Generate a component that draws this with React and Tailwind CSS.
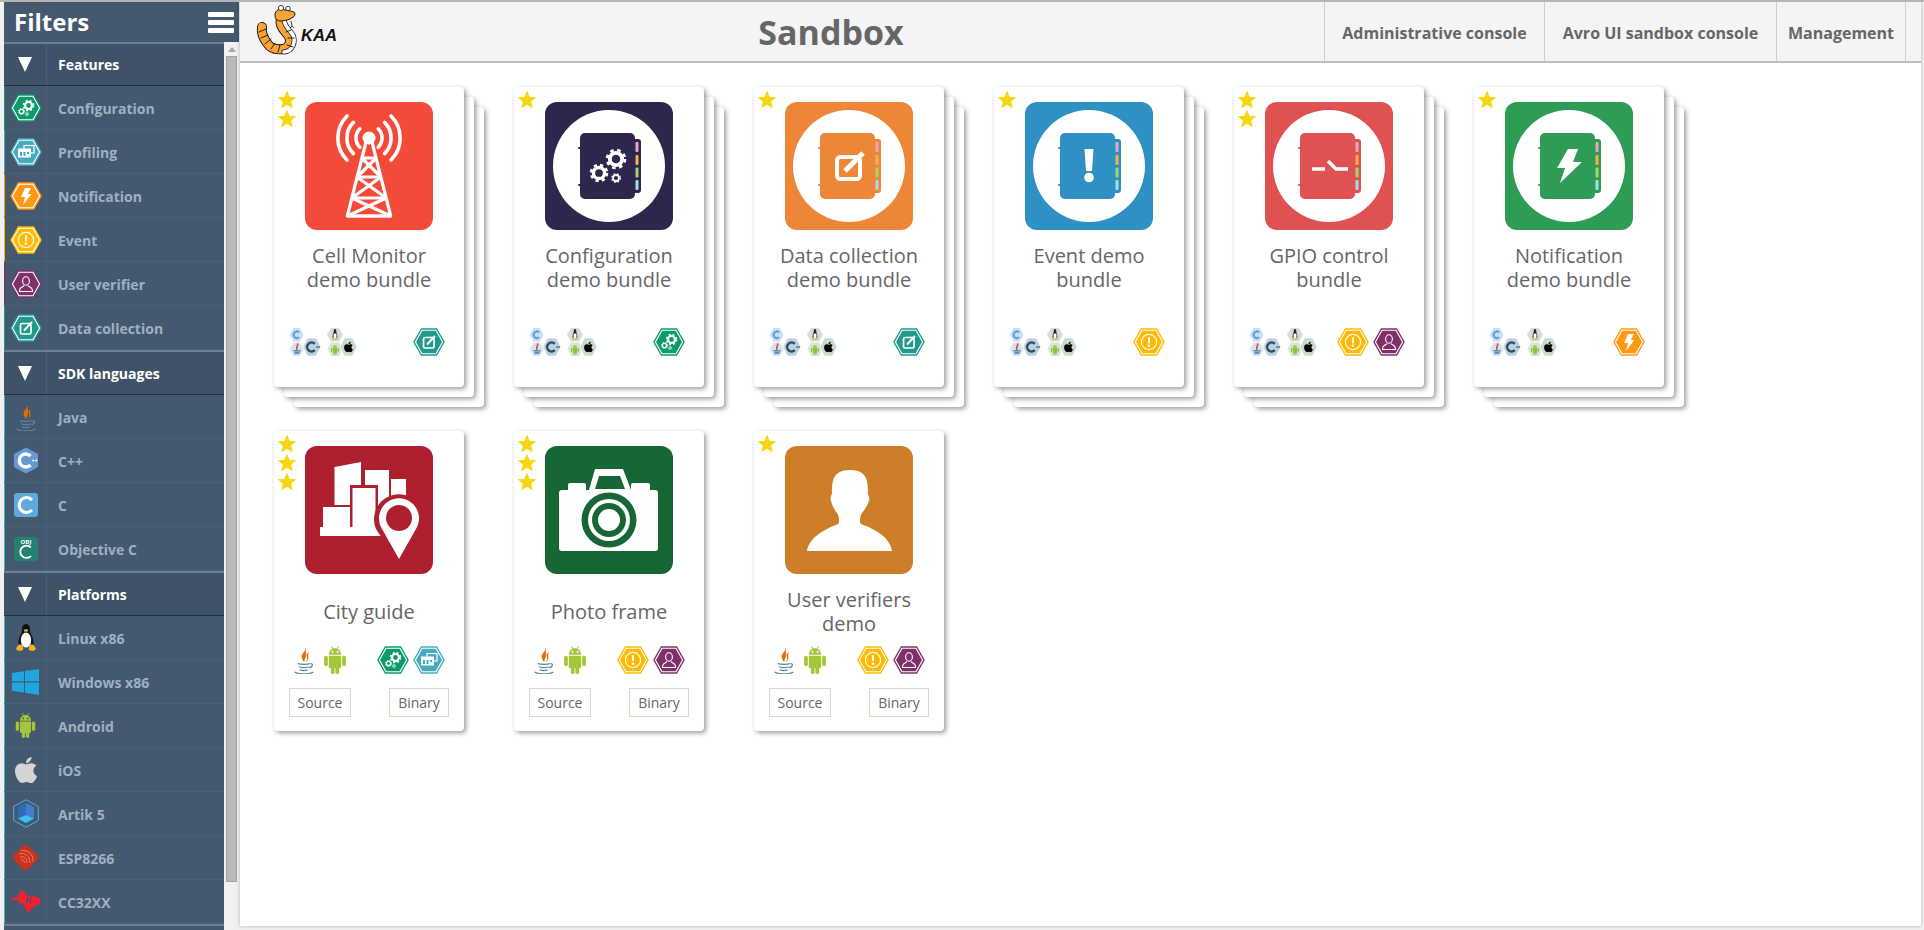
import React from 'react';
import { FaApple } from 'react-icons/fa';

// hexagon badges
const HEX = { config: '#0d9a6c', profile: '#46abc0', notif: '#ff9812', event: '#ffb900', user: '#7f3069', data: '#21998c' };

function Gear({ cx, cy, r, color = 'white' }) {
  const tooth = 2 * Math.PI * r * 0.92;
  return (
    <g fill="none" stroke={color}>
      <circle cx={cx} cy={cy} r={r * 0.62} strokeWidth={r * 0.38} />
      <circle cx={cx} cy={cy} r={r * 0.9} strokeWidth={r * 0.26} strokeDasharray={`${tooth / 16} ${tooth / 16}`} />
    </g>
  );
}

function HexGlyph({ type }) {
  if (type === 'config') return (<><Gear cx={18.5} cy={11.5} r={5.6} /><Gear cx={11.5} cy={17.5} r={3.4} /><Gear cx={17} cy={20} r={2} /></>);
  if (type === 'profile') return (
    <g>
      <rect x="14" y="7.5" width="10" height="7.5" fill="none" stroke="white" strokeWidth="1.2" />
      <rect x="8" y="10.5" width="13" height="9" fill="white" />
      <rect x="10" y="14" width="2" height="4" fill={HEX.profile} />
      <rect x="13.5" y="14" width="2" height="4" fill={HEX.profile} />
      <rect x="17" y="14" width="2" height="2" fill={HEX.profile} />
    </g>
  );
  if (type === 'notif') return <polygon points="15,6 21,6 17.8,12 21.5,12 13,23 15,15 11,15" fill="white" />;
  if (type === 'event') return (
    <g>
      <circle cx="16" cy="14" r="7.6" fill="none" stroke="white" strokeWidth="1.2" />
      <rect x="15" y="9" width="2" height="6.5" rx="1" fill="white" />
      <circle cx="16" cy="17.8" r="1.2" fill="white" />
    </g>
  );
  if (type === 'user') return (
    <g fill="none" stroke="white" strokeWidth="1.1">
      <ellipse cx="16" cy="11" rx="3.4" ry="4.2" />
      <path d="M14 15.5 C13.5 17 9.5 17 9.5 20.5 L9.5 21.5 L22.5 21.5 L22.5 20.5 C22.5 17 18.5 17 18 15.5" />
    </g>
  );
  return (
    <g>
      <rect x="10.5" y="9.5" width="10.5" height="10.5" rx="1.5" fill="none" stroke="white" strokeWidth="1.7" />
      <path d="M14 16.5 L22 8" stroke="white" strokeWidth="2" />
    </g>
  );
}

function HexIcon({ type }) {
  return (
    <svg viewBox="0 0 32 28" className="w-[32px] h-[28px] shrink-0">
      <polygon points="8,0.3 24,0.3 31.8,14 24,27.7 8,27.7 0.2,14" fill={HEX[type]} />
      <polygon points="9,2.2 23,2.2 29.6,14 23,25.8 9,25.8 2.4,14" fill="none" stroke="white" strokeWidth="1.1" />
      <HexGlyph type={type} />
    </svg>
  );
}

function JavaIcon({ className }) {
  return (
    <svg viewBox="1.5 0 19 27" className={className}>
      <path d="M12.5 0 C14 5 7 7.5 9 12 C10 14.5 11.5 15.5 11.5 15.5 C10.5 12.5 15 10 12.5 5.5 C13 4 13 2 12.5 0 Z" fill="#e76f00" />
      <path d="M16 5.5 C12.5 8 14 10.5 14 12.5 C14 14 12.5 15 12.5 15.5 C16 13.5 15 11 15 9.5 C15 8 15.5 6.5 16 5.5 Z" fill="#e76f00" />
      <g fill="none" stroke="#5b86a8" strokeWidth="1.2">
        <path d="M5 17 C8 18 14 18 16.5 17" />
        <path d="M6 20 C9 21 13 21 15.5 20" />
        <path d="M7 23 C10 24 12 24 14.5 23" />
        <path d="M17 17 C20 16.5 20 20 16 21" />
        <path d="M2 25 C6 27.5 16 27.5 20 25" />
      </g>
    </svg>
  );
}

// android robot, 24x28 box
function AndroidShape() {
  return (
    <>
      <path fillRule="evenodd" d="M6 9.5 C6 6.5 8 4.5 9.5 3.8 L8.2 1.4 L8.9 1 L10.3 3.4 C11.4 3 12.6 3 13.7 3.4 L15.1 1 L15.8 1.4 L14.5 3.8 C16 4.5 18 6.5 18 9.5 Z M9.5 5.8 a0.9 0.9 0 1 0 0.01 0 Z M14.5 5.8 a0.9 0.9 0 1 0 0.01 0 Z" />
      <path d="M6 10.3 H18 V21 A1.5 1.5 0 0 1 16.5 22.5 H7.5 A1.5 1.5 0 0 1 6 21 Z" />
      <rect x="1.5" y="10.3" width="3.6" height="10" rx="1.8" />
      <rect x="18.9" y="10.3" width="3.6" height="10" rx="1.8" />
      <rect x="8" y="20" width="3.6" height="8" rx="1.8" />
      <rect x="12.4" y="20" width="3.6" height="8" rx="1.8" />
    </>
  );
}

function AndroidIcon({ className }) {
  return <svg viewBox="1.5 1 21 27" className={className} fill="#a4c639"><AndroidShape /></svg>;
}

function TuxIcon({ className }) {
  return (
    <svg viewBox="0 0 22 28" className={className}>
      <path d="M11 0 C7 0 7 4 7 7 C7 10 3 13 3.5 20 L18.5 20 C19 13 15 10 15 7 C15 4 15 0 11 0 Z" fill="#111" />
      <ellipse cx="11" cy="16" rx="5.2" ry="7.5" fill="#fff" />
      <ellipse cx="11" cy="6.5" rx="2.2" ry="1.3" fill="#f5b120" />
      <path d="M1 25 C2 21 5 20 7 21 C8.5 23 8.5 25 8 26 C5 27.5 2.5 27 1 25 Z" fill="#f5b120" />
      <path d="M21 25 C20 21 17 20 15 21 C13.5 23 13.5 25 14 26 C17 27.5 19.5 27 21 25 Z" fill="#f5b120" />
    </svg>
  );
}

function COnly({ bg, className, children, hex }) {
  return (
    <svg viewBox="0 0 26 26" className={className}>
      {hex
        ? <polygon points="13,0 25,6.5 25,19.5 13,26 1,19.5 1,6.5" fill={bg} />
        : <rect x="1" y="1" width="24" height="24" rx="3" fill={bg} />}
      {children}
    </svg>
  );
}

function SideIcon({ id }) {
  switch (id) {
    case 'java': return <JavaIcon className="w-[22px] h-[28px]" />;
    case 'cpp': return (
      <COnly hex bg="#659ad2" className="w-[26px] h-[29px]">
        <path d="M17.5 8.5 A6.5 6.5 0 1 0 17.5 17.5" fill="none" stroke="white" strokeWidth="3.4" />
        <path d="M19 13 h2.4 M20.2 11.8 v2.4 M22 13 h2.4 M23.2 11.8 v2.4" stroke="white" strokeWidth="0.8" />
      </COnly>
    );
    case 'c': return (
      <COnly bg="#5fa9dc" className="w-[26px] h-[26px]">
        <path d="M19 8 A7.4 7.4 0 1 0 19 18" fill="none" stroke="white" strokeWidth="3" />
      </COnly>
    );
    case 'objc': return (
      <COnly bg="#26806f" className="w-[26px] h-[26px]">
        <text x="13" y="7.5" textAnchor="middle" fontSize="6" fontWeight="700" fill="white" fontFamily="'Open Sans',sans-serif">OBJ</text>
        <path d="M18 11.5 A6.2 6.2 0 1 0 18 20" fill="none" stroke="white" strokeWidth="1.8" />
      </COnly>
    );
    case 'linux': return <TuxIcon className="w-[22px] h-[28px]" />;
    case 'win': return (
      <svg viewBox="0 0 27 26" className="w-[27px] h-[26px]">
        <polygon points="0,4 12,2.2 12,12.2 0,12.2" fill="#1fa8e0" />
        <polygon points="13,2 27,0 27,12.2 13,12.2" fill="#1fa8e0" />
        <polygon points="0,13.5 12,13.5 12,23.5 0,21.8" fill="#1fa8e0" />
        <polygon points="13,13.5 27,13.5 27,26 13,23.8" fill="#1fa8e0" />
      </svg>
    );
    case 'android': return <AndroidIcon className="w-[21px] h-[25px]" />;
    case 'ios': return <FaApple className="w-[30px] h-[30px] text-[#d4d4d4]" />;
    case 'artik': return (
      <svg viewBox="0 0 26 29" className="w-[26px] h-[29px]">
        <polygon points="13,0.7 25.3,7.5 25.3,21.5 13,28.3 0.7,21.5 0.7,7.5" fill="none" stroke="#3fb7e6" strokeWidth="1" />
        <polygon points="5,8 13,4 13,16 5,19.5" fill="#2f6bb8" />
        <polygon points="13,4 21,8 21,19.5 13,16" fill="#3f7fce" />
        <polygon points="5,19.5 13,16 21,19.5 13,24" fill="#3fc0f2" />
      </svg>
    );
    case 'esp': return (
      <svg viewBox="0 0 29 29" className="w-[29px] h-[29px]">
        <rect x="4.5" y="4.5" width="20" height="20" rx="3" transform="rotate(45 14.5 14.5)" fill="#c8321f" />
        <g fill="none" stroke="#e98a6e" strokeWidth="0.9">
          <path d="M8 11 C14 9 19 13 19 20" />
          <path d="M10 8 C17 6 23 12 22 19" />
          <path d="M9 14 C13 13 16 15 16 20" />
          <path d="M10 17 C12 16.5 13.5 18 13.5 20" />
        </g>
      </svg>
    );
    default: return (
      <svg viewBox="0 0 29 21" className="w-[29px] h-[21px]">
        <polygon points="9,0 14,0 14,4 22,5 29,7 29,12 26,15 22,15 19,21 16,20 13,14 9,12 7,9 0,9 0,7 7,6" fill="#f0212b" />
        <text x="14" y="12" fontSize="11" fontWeight="700" fontStyle="italic" fill="#44586f" fontFamily="'Liberation Serif',serif">ti</text>
      </svg>
    );
  }
}

const SECTIONS = [
  { title: 'Features', h: 'h-[42px]', rows: [
    { label: 'Configuration', hex: 'config', accent: 'border-l-[#0d9a6c]' },
    { label: 'Profiling', hex: 'profile', accent: 'border-l-[#46abc0]' },
    { label: 'Notification', hex: 'notif', accent: 'border-l-[#ff9812]' },
    { label: 'Event', hex: 'event', accent: 'border-l-[#ffb900]' },
    { label: 'User verifier', hex: 'user', accent: 'border-l-[#7f3069]' },
    { label: 'Data collection', hex: 'data', accent: 'border-l-[#21998c]' },
  ] },
  { title: 'SDK languages', h: 'h-[43px]', rows: [
    { label: 'Java', icon: 'java' },
    { label: 'C++', icon: 'cpp' },
    { label: 'C', icon: 'c' },
    { label: 'Objective C', icon: 'objc' },
  ] },
  { title: 'Platforms', h: 'h-[43px]', rows: [
    { label: 'Linux x86', icon: 'linux' },
    { label: 'Windows x86', icon: 'win' },
    { label: 'Android', icon: 'android' },
    { label: 'iOS', icon: 'ios' },
    { label: 'Artik 5', icon: 'artik' },
    { label: 'ESP8266', icon: 'esp' },
    { label: 'CC32XX', icon: 'ti' },
  ] },
];

function Sidebar() {
  return (
    <aside className="w-[235px] shrink-0 h-[928px] flex flex-col bg-[#f1f1f1]">
      <div className="h-[40px] shrink-0 bg-[#44586f] flex items-center justify-between pl-[10px] pr-[5px]">
        <span className="text-[24px] font-bold text-white leading-none">Filters</span>
        <div className="flex flex-col gap-[3px] w-[26px]">
          <span className="h-[5px] rounded-[1px] bg-white" />
          <span className="h-[5px] rounded-[1px] bg-white" />
          <span className="h-[5px] rounded-[1px] bg-white" />
        </div>
      </div>
      <div className="flex flex-1 min-h-0">
        <div className="w-[220px] shrink-0 bg-[#44586f] overflow-hidden">
          {SECTIONS.map((s) => (
            <section key={s.title} className="border-t-2 border-[#6c7e93]">
              <div className={`${s.h} flex bg-[#3f5268] border-b border-[#25313f]`}>
                <div className="w-[43px] flex items-center justify-center border-r border-[#4c6076]">
                  <span className="w-0 h-0 border-l-[7.5px] border-r-[7.5px] border-t-[15px] border-l-transparent border-r-transparent border-t-white" />
                </div>
                <span className="pl-[11px] self-center text-[14px] font-bold text-white">{s.title}</span>
              </div>
              {s.rows.map((r) => (
                <div key={r.label} className="h-[44px] flex border-b border-[#4c6076]">
                  <div className={`w-[43px] shrink-0 flex items-center justify-center border-l border-r border-r-[#4c6076] ${r.accent || 'border-l-[#37b4c8]'}`}>
                    {r.hex ? <HexIcon type={r.hex} /> : <SideIcon id={r.icon} />}
                  </div>
                  <span className="pl-[11px] pt-[2px] self-center text-[14px] font-bold text-[#a0b0c0]">{r.label}</span>
                </div>
              ))}
            </section>
          ))}
          <div className="border-t-2 border-[#6c7e93] h-[10px]" />
        </div>
        <div className="flex-1 flex flex-col items-center pt-[5px]">
          <span className="w-0 h-0 border-l-[4px] border-r-[4px] border-b-[5px] border-l-transparent border-r-transparent border-b-[#a8a8a8]" />
          <span className="mt-[4px] w-[11px] h-[826px] bg-[#b9b9b9] border border-[#a3a3a3]" />
        </div>
      </div>
    </aside>
  );
}

function Notebook({ bg, children }) {
  return (
    <>
      <circle cx="64" cy="64" r="56" fill="white" />
      <rect x="84" y="37" width="12" height="54" rx="3" fill={bg} />
      <rect x="90.5" y="40" width="3" height="10" rx="1" fill="#e8a6c0" />
      <rect x="90.5" y="53" width="3" height="10" rx="1" fill="#f6b04a" />
      <rect x="90.5" y="65.5" width="3" height="10" rx="1" fill="#a5d46a" />
      <rect x="90.5" y="78" width="3" height="10" rx="1" fill="#a6dcec" />
      <rect x="33" y="45" width="4" height="2" rx="1" fill={bg} />
      <rect x="33" y="82" width="4" height="2" rx="1" fill={bg} />
      <rect x="35" y="31" width="55" height="66" rx="5" fill={bg} />
      {children}
    </>
  );
}

function TowerLogo() {
  const bars = [[56, 56.75, 71.25], [75, 52, 76], [96, 46.8, 81.2], [114, 42.3, 85.7]];
  return (
    <>
      <g fill="none" stroke="white" strokeWidth="3.6" strokeLinecap="round">
        <path d="M42 14 A31 31 0 0 0 42 58 M48.4 20.4 A22 22 0 0 0 48.4 51.6 M54.8 26.8 A13 13 0 0 0 54.8 45.2" />
        <path d="M86 14 A31 31 0 0 1 86 58 M79.6 20.4 A22 22 0 0 1 79.6 51.6 M73.2 26.8 A13 13 0 0 1 73.2 45.2" />
      </g>
      <g fill="none" stroke="white" strokeWidth="3.2" strokeLinejoin="round">
        <path d="M61 40 L42.3 114 L85.7 114 L67 40" />
        {bars.map(([y, a, b]) => <path key={y} d={`M${a} ${y} L${b} ${y}`} />)}
        <path d="M56.75 56 L76 75 M71.25 56 L52 75 M52 75 L81.2 96 M76 75 L46.8 96 M46.8 96 L85.7 114 M81.2 96 L42.3 114" />
      </g>
      <circle cx="64" cy="36" r="6.5" fill="white" />
    </>
  );
}

function CityLogo() {
  const c = '#ae1f30';
  return (
    <>
      <polygon points="29.5,21 56,16 56,59 29.5,59" fill="white" />
      <rect x="60" y="24" width="24" height="40" fill="white" />
      <rect x="86" y="33" width="15" height="22" fill="white" />
      <rect x="45" y="39" width="28" height="46" fill={c} />
      <rect x="47.5" y="42" width="23" height="42" fill="white" />
      <rect x="18" y="61" width="27" height="22" fill="white" />
      <rect x="15" y="81" width="62" height="9" fill="white" />
      <path d="M94 118 L71 83 A25 25 0 1 1 117 83 Z" fill={c} />
      <path d="M94 113 L76.5 82 A20 20 0 1 1 111.5 82 Z" fill="white" />
      <circle cx="94" cy="72" r="13" fill={c} />
    </>
  );
}

function CameraLogo() {
  const c = '#166636';
  return (
    <>
      <path fillRule="evenodd" fill="white" d="M50 23 L78 23 L86 44 L44 44 Z M54 30 L50 43 L80 43 L75 30 Z" />
      <rect x="23" y="37" width="18" height="12" rx="2" fill="white" />
      <rect x="86" y="37" width="19" height="12" rx="2" fill="white" />
      <rect x="14" y="44" width="99" height="61" rx="3" fill="white" />
      <circle cx="64" cy="74" r="27.5" fill={c} />
      <circle cx="64" cy="74" r="21" fill="white" />
      <circle cx="64" cy="74" r="17" fill={c} />
      <circle cx="64" cy="74" r="11" fill="white" />
    </>
  );
}

function UserLogo() {
  return (
    <path fill="white" d="M22 105 C24 92 38 84 53 78 C55 76 54 70 52 67 C48 62 47 58 46 55 C45 52 46 49 47 48 C47 36 47 24 65 24 C83 24 83 36 83 48 C84 50 85 53 84 55 C83 58 81 62 77 67 C75 70 74 76 76 78 C92 84 105 92 107 105 Z" />
  );
}

const LOGOS = {
  tower: { bg: '#f44a39', el: <TowerLogo /> },
  config: { bg: '#2e274d', el: <Notebook bg="#2e274d"><Gear cx={71} cy={57} r={10} color="white" /><Gear cx={54} cy={71} r={9} color="white" /><Gear cx={71} cy={76} r={4.8} color="white" /></Notebook> },
  data: { bg: '#ee8638', el: <Notebook bg="#ee8638"><rect x="52" y="55" width="23" height="22" rx="3.5" fill="none" stroke="white" strokeWidth="4" /><path d="M60 69 L78 51" stroke="white" strokeWidth="5" /></Notebook> },
  event: { bg: '#2e90c3', el: <Notebook bg="#2e90c3"><polygon points="59.5,47 68.5,47 67,69 61,69" fill="white" /><circle cx="64" cy="75.5" r="4.8" fill="white" /></Notebook> },
  gpio: { bg: '#e05151', el: <Notebook bg="#e05151"><path d="M47 67 H60 M63 59 L71 67 H83" fill="none" stroke="white" strokeWidth="3.4" /></Notebook> },
  notif: { bg: '#2f9c56', el: <Notebook bg="#2f9c56"><polygon points="63,47 73,47 68,60 77,60 55,81 60,66 52,66" fill="white" /></Notebook> },
  city: { bg: '#ae1f30', el: <CityLogo /> },
  camera: { bg: '#166636', el: <CameraLogo /> },
  user: { bg: '#ce7e28', el: <UserLogo /> },
};

function SdkCluster() {
  return (
    <svg viewBox="0 0 31 28" className="w-[31px] h-[28px]">
      <polygon points="3.5,0 10,0 13.5,6.7 10,13.5 3.5,13.5 0,6.7" fill="#c5e0ee" />
      <path d="M9.2 4.3 A3.3 3.3 0 1 0 9.2 9.2" fill="none" stroke="#4f9fd8" strokeWidth="1.8" />
      <polygon points="3.5,14.5 10,14.5 13.5,21 10,28 3.5,28 0,21" fill="#d3e3ec" />
      <path d="M7.5 15.5 C8.5 18 5.5 19 7 22" fill="none" stroke="#d8402a" strokeWidth="1.5" />
      <path d="M3.5 22.8 H10.5 M4.5 25 H9.5" stroke="#2f78b8" strokeWidth="1.3" />
      <polygon points="17.5,10 26,10 31,19 26,28 17.5,28 13,19" fill="#b9d3e0" stroke="white" strokeWidth="0.6" />
      <path d="M24.8 15.8 A4.5 4.5 0 1 0 24.8 22.2" fill="none" stroke="#34495f" strokeWidth="2.4" />
      <path d="M26 19 h4" stroke="#34495f" strokeWidth="1" />
    </svg>
  );
}

function PlatformCluster() {
  return (
    <svg viewBox="0 0 30 28" className="w-[30px] h-[28px]">
      <polygon points="4,0 12,0 16,6.7 12,13.5 4,13.5 0,6.7" fill="#cfe2d2" />
      <g transform="translate(4.4 1) scale(0.33 0.42)"><path d="M11 0 C7 0 7 4 7 7 C7 10 3 13 3.5 20 L18.5 20 C19 13 15 10 15 7 C15 4 15 0 11 0 Z" fill="#222" /><ellipse cx="11" cy="16" rx="5" ry="6" fill="#fff" /><path d="M1 25 L9 21 L9 26 Z M21 25 L13 21 L13 26 Z" fill="#e8a820" /></g>
      <polygon points="4,14.5 12,14.5 15.5,21 12,28 4,28 0.5,21" fill="#d6e6d8" />
      <g transform="translate(3.4 16.2) scale(0.38)" fill="#8cc63f"><AndroidShape /></g>
      <polygon points="17.5,10 25.5,10 30,19 25.5,28 17.5,28 13,19" fill="#c8dccb" stroke="white" strokeWidth="0.6" />
      <g transform="translate(15.5 13)"><FaApple size={12} color="#000" /></g>
    </svg>
  );
}

const Star = () => (
  <svg viewBox="0 0 20 19" className="w-[20px] h-[19px] block">
    <polygon points="10,0.5 12.6,6.9 19.4,7.3 14.1,11.7 15.9,18.4 10,14.7 4.1,18.4 5.9,11.7 0.6,7.3 7.4,6.9" fill="#f6d60e" />
  </svg>
);

const CARDS = [
  { logo: 'tower', title: ['Cell Monitor', 'demo bundle'], stars: 2, hex: ['data'], stack: true },
  { logo: 'config', title: ['Configuration', 'demo bundle'], stars: 1, hex: ['config'], stack: true },
  { logo: 'data', title: ['Data collection', 'demo bundle'], stars: 1, hex: ['data'], stack: true },
  { logo: 'event', title: ['Event demo', 'bundle'], stars: 1, hex: ['event'], stack: true },
  { logo: 'gpio', title: ['GPIO control', 'bundle'], stars: 2, hex: ['event', 'user'], stack: true },
  { logo: 'notif', title: ['Notification', 'demo bundle'], stars: 1, hex: ['notif'], stack: true },
  { logo: 'city', title: ['City guide'], stars: 3, hex: ['config', 'profile'] },
  { logo: 'camera', title: ['Photo frame'], stars: 3, hex: ['event', 'user'] },
  { logo: 'user', title: ['User verifiers', 'demo'], stars: 1, hex: ['event', 'user'] },
];

const SHEET = 'bg-white rounded-[4px] shadow-[2px_2px_5px_rgba(0,0,0,0.4)]';

function Card({ card }) {
  const logo = LOGOS[card.logo];
  return (
    <div className="relative w-[190px] h-[300px]">
      {card.stack && <div className={`absolute left-[20px] top-[20px] w-[190px] h-[300px] ${SHEET}`} />}
      {card.stack && <div className={`absolute left-[10px] top-[10px] w-[190px] h-[300px] ${SHEET}`} />}
      <div className={`relative h-full flex flex-col items-center pt-[15px] ${SHEET}`}>
        <div className="absolute left-[3px] top-[3px]">
          {Array.from({ length: card.stars }).map((_, i) => <Star key={i} />)}
        </div>
        <svg viewBox="0 0 128 128" className="w-[128px] h-[128px] shrink-0 rounded-[12px]" style={{ background: logo.bg }}>
          {logo.el}
        </svg>
        <div className="mt-[4px] h-[68px] flex flex-col justify-center text-center text-[20px] leading-[24px] text-[#666]">
          {card.title.map((t) => <div key={t}>{t}</div>)}
        </div>
        {card.stack ? (
          <div className="mt-[26px] w-full flex justify-between pl-[16px] pr-[19px]">
            <div className="flex gap-[6px]"><SdkCluster /><PlatformCluster /></div>
            <div className="flex gap-[4px]">{card.hex.map((h) => <HexIcon key={h} type={h} />)}</div>
          </div>
        ) : (
          <>
            <div className="w-full flex justify-between pl-[19px] pr-[19px]">
              <div className="flex items-center gap-[8px]">
                <JavaIcon className="w-[22px] h-[28px]" />
                <AndroidIcon className="w-[24px] h-[28px]" />
              </div>
              <div className="flex gap-[4px]">{card.hex.map((h) => <HexIcon key={h} type={h} />)}</div>
            </div>
            <div className="mt-[14px] w-full flex justify-between pl-[15px] pr-[15px]">
              <span className="w-[62px] h-[29px] flex items-center justify-center border border-[#d8d8d8] text-[14px] text-[#666]">Source</span>
              <span className="w-[60px] h-[29px] flex items-center justify-center border border-[#d8d8d8] text-[14px] text-[#666]">Binary</span>
            </div>
          </>
        )}
      </div>
    </div>
  );
}

function KaaLogo() {
  const body = 'M31 16 C29 24 34 28 38 33 C42 38 40 46 33 47 C26 48 20 46 17 41 C14 37 11 31 12 25';
  return (
    <svg viewBox="0 0 88 60" className="w-[88px] h-[60px] shrink-0">
      <g fill="none" strokeLinecap="round">
        <path d={body} stroke="#111" strokeWidth="10" />
        <path d={body} stroke="#f7a435" strokeWidth="8.2" />
        <path d="M34 17 C34 24 40 28 43 33 C46 40 43 49 34 50" stroke="#111" strokeWidth="5" />
        <path d="M34 17 C34 24 40 28 43 33 C46 40 43 49 34 50" stroke="#fff" strokeWidth="3.6" />
        <path d="M9 30 L16 27 M11 36 L18 33 M15 42 L21 37 M21 47 L25 41 M28 50 L30 43 M36 30 L41 28 M38 36 L44 36 M37 43 L43 45" stroke="#111" strokeWidth="0.9" />
      </g>
      <path d="M25 13 C25 8 30 6 35 8 C39 9 45 9 45 12 C45 16 36 19 31 19 C27 19 25 17 25 13 Z" fill="#f7a435" stroke="#111" strokeWidth="1" />
      <circle cx="31" cy="6" r="2.6" fill="#fff" stroke="#111" strokeWidth="0.8" />
      <circle cx="38" cy="6.5" r="2.2" fill="#fff" stroke="#111" strokeWidth="0.8" />
      <path d="M41 19 L42 24 M42 24 L40 26 M42 24 L44 26" stroke="#111" strokeWidth="0.8" fill="none" />
      <text x="51" y="39" fontSize="17" fontStyle="italic" fontWeight="700" fill="#111" fontFamily="'Liberation Sans',sans-serif" textLength="36" lengthAdjust="spacingAndGlyphs">KAA</text>
    </svg>
  );
}

export default function App() {
  return (
    <div className="h-[930px] overflow-hidden border-t-2 border-[#b5b5b5] bg-[#f1f1f1] pl-[4px] flex font-['Open_Sans',sans-serif]">
      <Sidebar />
      <div className="w-[1681px] h-[924px] ml-[1px] flex flex-col bg-white shadow-[0_0_4px_rgba(0,0,0,0.25)]">
        <header className="h-[61px] shrink-0 flex pl-[10px] pr-[15px] bg-[#f4f4f4] border-b-2 border-[#bdbdbd]">
          <KaaLogo />
          <h1 className="flex-1 text-center self-center pt-[2px] text-[34px] font-bold text-[#666]">Sandbox</h1>
          <nav className="flex text-[16px] font-bold text-[#666]">
            <a className="w-[220px] pt-[3px] flex items-center justify-center border-l border-[#d0d0d0]">Administrative console</a>
            <a className="w-[232px] pt-[3px] flex items-center justify-center border-l border-[#d0d0d0]">Avro UI sandbox console</a>
            <a className="w-[130px] pt-[3px] flex items-center justify-center border-x border-[#d0d0d0]">Management</a>
          </nav>
        </header>
        <main className="pl-[34px] pt-[24px] grid grid-cols-[repeat(6,190px)] gap-x-[50px] gap-y-[44px] content-start">
          {CARDS.map((c) => <Card key={c.logo} card={c} />)}
        </main>
      </div>
    </div>
  );
}
